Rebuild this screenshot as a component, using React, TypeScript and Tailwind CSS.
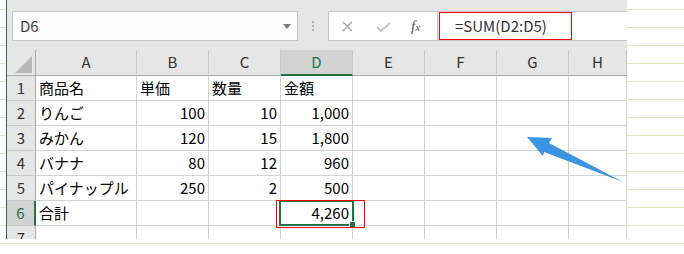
import React from 'react';

const JP = "font-['Noto_Sans_CJK_JP','Noto_Sans',sans-serif]";

const cols = ['A', 'B', 'C', 'D', 'E', 'F', 'G', 'H'];

const rows: (string | number)[][] = [
  ['商品名', '単価', '数量', '金額'],
  ['りんご', 100, 10, '1,000'],
  ['みかん', 120, 15, '1,800'],
  ['バナナ', 80, 12, '960'],
  ['パイナップル', 250, 2, '500'],
  ['合計', '', '', '4,260'],
  ['', '', '', ''],
];

const isNum = (v: string | number) => typeof v === 'number' || /^[\d,]+$/.test(String(v));

const Cell = ({ value, selected }: { value: string | number; selected?: boolean }) => (
  <div
    className={`relative h-full border-r border-b border-[#d4d4d4] bg-white flex items-center text-[15px] text-black ${
      isNum(value) ? 'justify-end pr-[3px]' : 'justify-start pl-[3px]'
    } ${selected ? 'z-10' : ''}`}
  >
    {value}
    {selected && (
      <>
        <div className="absolute left-[-2px] top-[-1px] w-[75px] h-[26px] border-2 border-[#217346]" />
        <div className="absolute left-[69px] top-[21px] w-[5px] h-[5px] bg-[#217346] outline outline-1 outline-white" />
      </>
    )}
  </div>
);

export default function App() {
  return (
    <div
      className={`relative w-[684px] h-[254px] overflow-hidden bg-white bg-[repeating-linear-gradient(to_bottom,transparent_0,transparent_9px,#dce9c6_9px,#dce9c6_10px,transparent_10px,transparent_18px)] ${JP}`}
    >
      <div className="ml-[6px] w-[621px] h-[239px] border-l border-[#217346] bg-[#e6e6e6] overflow-hidden">
        {/* formula bar row */}
        <div className="h-[50px] flex items-start pt-[11px] pl-[5px]">
          <div className="w-[286px] h-[30px] border border-[#c6c6c6] bg-[#fdfdfd] flex items-center justify-between pl-[7px] pr-[6px]">
            <span className="text-[15px] text-[#444]">D6</span>
            <svg width="8" height="5" viewBox="0 0 8 5">
              <path d="M0 0 L8 0 L4 5 Z" fill="#7a7a7a" />
            </svg>
          </div>
          <div className="w-[30px] h-[30px] flex flex-col items-center justify-center gap-[2px]">
            <span className="w-[2px] h-[2px] bg-[#b4b4b4]" />
            <span className="w-[2px] h-[2px] bg-[#b4b4b4]" />
            <span className="w-[2px] h-[2px] bg-[#b4b4b4]" />
          </div>
          <div className="w-[110px] h-[30px] border border-[#c6c6c6] bg-white flex items-center">
            <svg className="ml-[13px]" width="11" height="11" viewBox="0 0 11 11">
              <path d="M1 1 L10 10 M10 1 L1 10" stroke="#a6a6a6" strokeWidth="1.3" />
            </svg>
            <svg className="ml-[23px] mt-[2px]" width="15" height="10" viewBox="0 0 15 10">
              <path d="M1 5 L5 9 L14 1" stroke="#c4c4c4" strokeWidth="2" fill="none" />
            </svg>
            <span className="ml-[20px] font-['Liberation_Serif',serif] italic text-[15px] text-[#555] leading-none">
              f<span className="text-[11px]">x</span>
            </span>
          </div>
          <div className="flex-1 h-[30px] border-y border-[#c6c6c6] bg-white pl-[1px]">
            <div className="w-[133px] h-[28px] border border-[#ff0000] flex items-center pl-[15px] text-[15px] text-[#333]">
              =SUM(D2:D5)
            </div>
          </div>
        </div>

        {/* grid */}
        <div className="grid grid-cols-[29px_101px_72px_72px_72px_72px_72px_72px_58px] grid-rows-[26px_25px_25px_25px_25px_25px_25px_25px]">
          <div className="border-r border-b border-[#ababab] flex items-end justify-end pr-[3px] pb-[2px]">
            <svg width="17" height="17" viewBox="0 0 17 17">
              <path d="M17 0 L17 17 L0 17 Z" fill="#b8b8b8" />
            </svg>
          </div>
          {cols.map((c) =>
            c === 'D' ? (
              <div
                key={c}
                className="bg-[#d2d2d2] border-r border-[#c8c8c8] border-b-2 border-b-[#217346] flex items-center justify-center text-[15px] text-[#217346]"
              >
                {c}
              </div>
            ) : (
              <div
                key={c}
                className="border-r border-[#c8c8c8] border-b border-b-[#ababab] flex items-center justify-center text-[15px] text-[#333]"
              >
                {c}
              </div>
            )
          )}

          {rows.map((r, i) => (
            <React.Fragment key={i}>
              {i === 5 ? (
                <div className="bg-[#d2d2d2] border-r-2 border-r-[#217346] border-b border-[#c8c8c8] flex items-center justify-center text-[15px] text-[#217346]">
                  {i + 1}
                </div>
              ) : (
                <div className="border-r border-r-[#ababab] border-b border-[#c8c8c8] flex items-center justify-center text-[15px] text-[#333]">
                  {i + 1}
                </div>
              )}
              {r.map((v, j) => (
                <Cell key={j} value={v} selected={i === 5 && j === 3} />
              ))}
              {[0, 1, 2, 3].map((k) => (
                <Cell key={'e' + k} value="" />
              ))}
            </React.Fragment>
          ))}
        </div>
      </div>

      {/* annotation: red box around the total cell */}
      <div className="absolute left-[276px] top-[200px] w-[89px] h-[28px] border border-[#ff0000] z-20" />

      {/* annotation arrow */}
      <svg className="absolute left-0 top-0 z-20 pointer-events-none" width="684" height="254" viewBox="0 0 684 254">
        <polygon points="527,137 552,138 549,143 623,182 544,152 543,156" fill="#3b94e2" />
      </svg>
    </div>
  );
}
